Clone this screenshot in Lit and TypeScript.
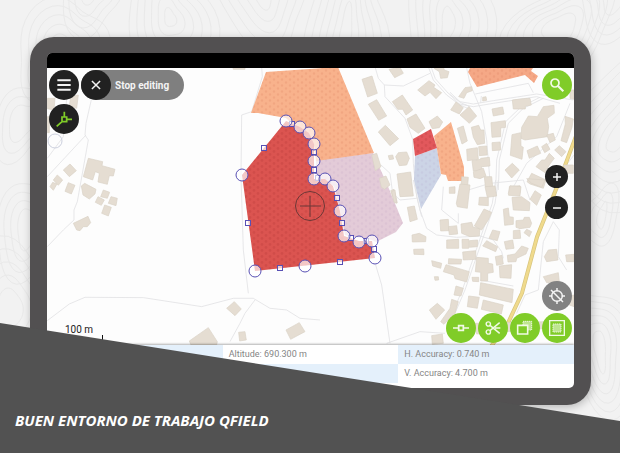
import { LitElement, html, svg, css } from "lit";
import { customElement } from "lit/decorators.js";

/* Map sheets: each holds outlines in thirds of a map unit from its own origin. */
interface Sheet {
  x: number;
  y: number;
  roads: string[];
  buildings: string[];
}

const SHEETS: Sheet[] = [
  {
    x: 0, y: 20,
    roads: [
      "275,150 275,235 258,310 255,345 265,360 232,545 222,570 222,600 190,630 142,680",
      "142,470 258,345",
      "142,415 190,350 200,235",
      "142,902 208,852 255,832 430,833 605,860 700,835 760,835 810,865 860,870 900,895 960,900",
      "765,840 735,880 720,910 690,965",
    ],
    buildings: [
      "265,415 308,425 306,437 345,448 340,468 328,467 322,493 294,486 298,460 286,455 278,480 250,470",
      "190,450 210,432 229,452 208,470",
      "160,480 172,465 188,480 175,496",
      "150,500 158,487 171,492 160,511",
      "195,514 205,488 225,496 214,522",
      "244,498 254,490 288,508 285,522 268,537 249,525",
      "302,530 310,510 329,517 322,535",
      "286,547 294,530 313,540 304,556",
      "325,550 333,530 352,535 348,557",
      "305,580 314,555 334,562 325,588",
      "142,235 165,235 162,270 142,266",
      "212,230 235,225 230,265 208,258",
      "142,290 148,290 148,338 142,338",
      "220,610 264,589 272,608 262,620 250,620 240,632 230,630",
      "568,963 625,923 652,965 650,975 573,975",
      "680,865 703,845 724,867 705,887",
      "716,937 735,935 739,960 719,963",
      "858,930 898,908 915,935 872,958",
    ],
  },
  {
    x: 230, y: 50,
    roads: [
      "95,50 97,80 65,185 35,195 33,380 40,600 55,730",
      "437,645 455,705 480,880",
    ],
    buildings: ["8,50 45,50 45,58 10,58"],
  },
  {
    x: 350, y: 50,
    roads: [
      "75,50 85,85 103,105 160,108 240,70",
      "103,105 105,140 165,205 188,268 190,340 200,440 215,500",
      "235,50 250,90 290,135 330,165 360,178",
      "243,50 256,86 294,129 332,158 360,170",
      "93,345 120,370 128,430 150,450 200,445",
    ],
    buildings: [
      "36,88 66,78 82,130 53,141",
      "55,163 80,149 110,198 86,211",
      "85,246 106,226 146,266 120,287",
      "117,58 150,52 160,70 134,83",
      "127,155 157,135 188,180 168,195 158,178 143,178",
      "171,207 198,192 225,235 205,250 180,232",
      "203,120 237,92 255,105 251,112 275,128 258,146 240,127 225,138",
      "237,215 262,198 278,216 268,233 247,236",
      "252,55 280,50 283,60 297,65 292,83 272,85 268,65",
      "115,317 128,315 131,327 118,329",
      "137,320 145,308 170,306 178,325 170,345 148,347",
      "65,315 80,310 93,350 76,362",
      "88,385 108,378 120,405 104,418 94,412",
      "141,372 182,366 190,438 150,440",
      "298,412 315,410 315,430 298,430",
      "122,422 132,418 142,458 134,458",
    ],
  },
  {
    x: 450, y: 40,
    roads: [
      "0,157 30,185 70,192 130,182 260,162 370,180",
      "0,164 28,192 70,200 130,190 260,170 330,190",
      "145,450 148,360 175,250 220,205 280,175",
      "137,450 140,360 167,245 214,200 270,172",
      "122,450 110,300 95,215 60,130 50,84",
      "76,162 235,130 250,158",
      "92,188 94,168",
      "360,190 320,290 230,370 185,450",
      "300,480 330,400 372,345",
    ],
    buildings: [
      "26,170 45,143 65,140 67,152 50,158 42,175",
      "2,210 18,186 40,203 28,222",
      "30,225 57,200 80,228 58,250",
      "98,172 108,170 110,181 98,183",
      "126,207 158,201 162,222 130,228",
      "187,180 220,176 240,175 244,195 226,199 226,207 190,207",
      "123,248 166,242 167,262 152,264 152,290 126,292",
      "126,308 150,306 152,330 127,332",
      "215,262 228,240 235,228 262,230 280,200 312,196 313,220 292,235 296,260 292,290 225,300 213,295",
      "186,284 212,278 213,318 220,322 216,358 181,346",
      "290,285 310,280 316,300 300,308",
      "231,332 262,318 272,340 238,355",
      "275,320 290,310 300,328 284,338",
      "314,330 328,317 348,335 335,350",
      "165,390 187,370 208,390 185,414",
      "345,229 370,237 366,262 350,308 333,302 346,252",
      "258,380 275,360 285,360 298,340 313,355 300,372 285,398",
      "231,425 245,400 288,420 280,445 240,432",
      "178,440 210,437 210,458 178,458",
      "64,262 86,256 92,270 102,270 104,310 82,314 70,292",
      "50,328 82,323 85,358 52,362",
      "86,320 110,318 112,345 88,347",
      "66,362 92,358 92,355 118,352 120,378 95,380 95,390 70,393",
      "70,395 100,385 108,408 90,416 72,412",
      "103,410 125,410 128,440 106,440",
      "340,375 370,375 370,400 350,400",
      "360,150 372,150 372,178 360,175",
      "22,265 40,258 52,303 36,312",
      "35,410 55,412 52,450 33,448",
    ],
  },
  {
    x: 380, y: 180,
    roads: [
      "100,0 120,90 140,145 170,165 230,172 300,168 340,180 365,215 370,235",
      "355,0 345,70 300,200 255,330 225,400 212,440",
      "347,0 337,70 292,200 247,330 217,400 204,440",
      "190,20 185,90 235,130 235,100",
      "520,125 538,150 535,230 560,270",
      "520,125 490,185 475,330 435,345 410,400",
      "20,490 120,455 195,460",
      "300,300 400,318",
      "265,30 330,10 430,0 450,60",
    ],
    buildings: [
      "35,35 45,30 50,70 42,66",
      "82,82 103,78 112,118 90,125",
      "96,165 118,160 138,170 137,185 97,186",
      "101,208 131,207 132,224 102,223",
      "229,70 240,12 270,15 262,85 232,80",
      "298,52 325,52 325,77 296,75",
      "315,20 345,18 350,48 322,52",
      "385,40 390,17 423,20 420,48 386,46",
      "396,52 425,50 450,68 448,92 400,90",
      "450,58 465,32 484,45 470,76",
      "440,-4 495,0 485,22 455,10",
      "370,88 385,84 388,110 400,112 400,133 374,136",
      "180,120 205,118 207,152 182,153",
      "205,140 230,137 233,162 208,164",
      "243,132 275,127 280,142 300,145 298,168 270,170 245,160",
      "283,138 312,87 335,97 325,120 305,150",
      "327,175 338,150 360,155 352,182",
      "200,180 236,178 236,205 200,205",
      "246,178 266,178 266,205 247,205",
      "268,182 293,180 292,200 268,202",
      "308,198 320,182 353,200 347,215",
      "373,185 398,180 402,205 378,208",
      "400,152 420,150 422,175 400,176",
      "408,122 430,120 433,112 448,112 455,130 450,142 420,146 408,142",
      "432,158 440,148 455,155 448,170",
      "248,216 287,212 288,238 250,240",
      "382,226 405,222 425,198 445,205 438,222 410,235 408,245 384,246",
      "346,230 366,226 370,252 350,256",
      "358,258 395,254 393,295 360,293",
      "290,232 325,235 325,250 338,252 340,277 323,280 323,303 302,303 302,277 286,275",
      "206,236 245,238 243,252 205,252",
      "190,275 198,254 268,275 260,306 225,296 222,285",
      "155,242 185,250 182,265 158,258",
      "163,290 175,290 176,300 165,301",
      "276,292 296,292 296,305 278,304",
      "302,308 400,328 396,368 298,345",
      "310,360 370,375 364,402 304,388",
      "266,348 298,352 292,385 262,380",
      "228,318 250,325 243,348 222,345",
      "148,390 172,370 194,390 168,418",
      "182,425 210,385 215,358 235,365 225,400 192,433",
      "155,467 187,462 190,490 157,493",
      "493,230 505,210 530,208 534,240 500,245",
      "557,225 582,223 582,245 560,245",
      "490,290 535,278 538,305 500,308",
      "568,348 582,345 582,380 568,375",
      "285,430 500,425 500,445 290,462",
    ],
  },
];

const VERTICES: [number, number][] = [
  [286, 121], [300, 127], [309, 133], [314, 144], [314, 161], [314, 179], [325, 179], [333, 186],
  [340, 211], [344, 236], [359, 242], [372, 241], [375, 258], [305, 266], [255, 271], [242, 175],
];
const MIDPOINTS: [number, number][] = [
  [264, 148], [248, 223], [280, 268], [340, 262], [337, 198], [342, 223], [314, 170],
  [292, 124], [351, 238], [366, 241], [374, 249], [318, 178], [314, 152],
];

/* Contour hills: centre, radii, tilt in degrees, number of rings and the gap between them. */
type Hill = [number, number, number, number, number, number, number];
const HILLS: Hill[] = [
  [8, 312, 14, 22, 10, 5, 8],
  [28, 228, 10, 22, 8, 4, 7],
  [60, 50, 12, 16, 35, 5, 7],
  [22, 122, 12, 20, 20, 3, 7],
  [170, 18, 6, 9, -10, 6, 7],
  [346, 30, 6, 24, 8, 6, 7],
  [448, 24, 7, 16, 5, 6, 7],
  [260, -12, 10, 22, -20, 5, 8],
  [560, 28, 12, 18, 50, 6, 6],
  [612, 0, 10, 14, 10, 4, 7],
  [622, 130, 8, 26, 30, 7, 7],
  [602, 216, 4, 14, 10, 3, 6],
  [600, 350, 6, 20, -8, 6, 6],
  [90, -10, 10, 14, 0, 4, 7],
];

/* One closed contour; the wobble gives each hill its own uneven outline. */
function contour([cx, cy, rx, ry, tilt, , gap]: Hill, ring: number): string {
  const turn = (tilt * Math.PI) / 180;
  const points: string[] = [];
  for (let a = 0; a < 360; a += 8) {
    const t = (a * Math.PI) / 180;
    const k = 1 + 0.13 * Math.sin(3 * t + cx) + 0.08 * Math.sin(2 * t + cy + ring / 3);
    const x = Math.cos(t) * (rx + ring * gap) * k;
    const y = Math.sin(t) * (ry + ring * gap * 1.4) * k;
    points.push(
      `${(cx + x * Math.cos(turn) - y * Math.sin(turn)).toFixed(1)},${(cy + x * Math.sin(turn) + y * Math.cos(turn)).toFixed(1)}`,
    );
  }
  return points.join(" ");
}

const icon = (body: unknown) =>
  html`<svg class="icon" viewBox="0 0 24 24" aria-hidden="true">${body}</svg>`;

const ICONS = {
  menu: icon(svg`<path d="M2 5h20M2 12h20M2 19h20" stroke-width="3"/>`),
  close: icon(svg`<path d="M5 5l14 14M19 5L5 19" stroke-width="2.600"/>`),
  snap: icon(svg`<path d="M9 9h7v7H9zM12.500 9V1M16 12.500h8M9 16l-8 7" stroke-width="2.600"/>`),
  search: icon(svg`<circle cx="9" cy="9" r="6" stroke-width="2.600"/><path d="M13.500 13.500l8 8" stroke-width="3.200"/>`),
  plus: icon(svg`<path d="M12 4v16M4 12h16" stroke-width="3"/>`),
  minus: icon(svg`<path d="M4 12h16" stroke-width="3"/>`),
  gps: icon(svg`<circle cx="12" cy="12" r="8" stroke-width="2.200"/><path d="M12 0v5M12 19v5M0 12h5M19 12h5M3 3l18 18" stroke-width="2.200"/>`),
  vertex: icon(svg`<path d="M8.500 8.500h7v7h-7zM0 12h8M16 12h8" stroke-width="2.600"/>`),
  cut: icon(svg`<circle cx="5" cy="6" r="3.200" stroke-width="2.200"/><circle cx="5" cy="18" r="3.200" stroke-width="2.200"/><path d="M7.500 8L22 20M7.500 16L22 4M15 12h8" stroke-width="2.200"/>`),
  copy: icon(svg`<path d="M9 2h13v13H9z" class="hatch"/><path d="M9 8V2h13v13h-5" stroke-width="1.400" stroke-dasharray="2 1"/><path d="M1 8h15v13H1z" class="solid" stroke-width="2.400"/>`),
  select: icon(svg`<path d="M6 6h12v12H6z" class="hatch"/><path d="M6 6h12v12H6z" stroke-width="1.400" stroke-dasharray="2 1"/><path d="M1 1h22v22H1z" stroke-width="2"/>`),
};

@customElement("field-map")
export class FieldMap extends LitElement {
  static styles = css`
    :host { display: block; position: absolute; inset: 0; }
    svg { display: block; width: 100%; height: 100%; background: #fdfdfd; }
    .road { fill: none; stroke: #e2e2e4; stroke-width: 2.5; stroke-linejoin: round; }
    .building { fill: #e5ddd2; stroke: #dad1c5; stroke-width: 2; }
    .casing { fill: none; stroke: #d6c47e; stroke-width: 4; }
    .highway { fill: none; stroke: #f0da8c; stroke-width: 2.6; }
    .node { fill: #fff; fill-opacity: 0.68; stroke: #5850b4; stroke-width: 1; }
    .target { fill: none; stroke: #6b3736; stroke-width: 1; }
    .scale { font: 10px Roboto, sans-serif; fill: #222; }
    .bar { stroke: #111; stroke-width: 1; }
    .ring { fill: none; stroke: #ccd0de; stroke-width: 1; }
  `;

  render() {
    const parcel = (points: string, fill: string, dots: string) => svg`
      <polygon points=${points} fill=${fill}></polygon>
      <polygon points=${points} fill=${`url(#${dots})`}></polygon>`;
    return html`
      <svg viewBox="47 68 527 277" preserveAspectRatio="xMidYMid slice" role="img" aria-label="Parcel map">
        <defs>
          <pattern id="warm" width="8" height="6" patternUnits="userSpaceOnUse">
            <circle cx="2" cy="1.500" r="1.200" fill="#c05030" fill-opacity=".12"></circle>
            <circle cx="6" cy="4.500" r="1.200" fill="#c05030" fill-opacity=".12"></circle>
          </pattern>
          <pattern id="deep" width="8" height="6" patternUnits="userSpaceOnUse">
            <circle cx="2" cy="1.500" r="1.400" fill="#8c2020" fill-opacity=".14"></circle>
            <circle cx="6" cy="4.500" r="1.400" fill="#8c2020" fill-opacity=".14"></circle>
          </pattern>
          <pattern id="cool" width="8" height="6" patternUnits="userSpaceOnUse">
            <circle cx="2" cy="1.500" r="1.200" fill="#a080b0" fill-opacity=".1"></circle>
            <circle cx="6" cy="4.500" r="1.200" fill="#a080b0" fill-opacity=".1"></circle>
          </pattern>
        </defs>
        ${SHEETS.map((s) => svg`
          <g transform=${`translate(${s.x} ${s.y}) scale(0.3333)`}>
            ${s.roads.map((p) => svg`<polyline class="road" points=${p}></polyline>`)}
          </g>`)}
        <polyline class="casing" points="576,136 557,187 537,237 522,293 508,323 490,348"></polyline>
        <polyline class="highway" points="576,136 557,187 537,237 522,293 508,323 490,348"></polyline>
        ${parcel("316,160 373,153 387,184 403,223 396,232 376,242 372,240 345,235 340,210 334,186 316,178", "#e3cbd8", "cool")}
        ${parcel("266,72 338,67 374,153 316,161 314,145 286,118 258,113 251,113", "#f8b28c", "warm")}
        ${parcel("415,156 437,148 441,175 438,180 421,209 414,180", "#ccd4e6", "cool")}
        ${parcel("434,136 451,122 464,167 464,181 448,181 446,175 441,174 437,149", "#f8b28c", "warm")}
        ${parcel("470,68 533,68 531,71 538,76 534,83 525,75 477,87 468,72", "#f5a886", "warm")}
        ${parcel("413,139 431,129 437,148 415,156", "#e2585c", "deep")}
        ${parcel("286,121 300,127 309,133 314,144 314,179 325,179 333,186 340,211 344,236 359,241 372,241 375,258 255,271 242,175", "#db5450", "deep")}
        ${SHEETS.map((s) => svg`
          <g transform=${`translate(${s.x} ${s.y}) scale(0.3333)`}>
            ${s.buildings.map((p) => svg`<polygon class="building" points=${p}></polygon>`)}
          </g>`)}
        <circle class="ring" cx="55" cy="141" r="7"></circle>
        ${MIDPOINTS.map(([x, y]) => svg`<rect class="node" x=${x - 2.5} y=${y - 2.5} width="5" height="5"></rect>`)}
        ${VERTICES.map(([x, y]) => svg`<circle class="node" cx=${x} cy=${y} r="6"></circle>`)}
        <circle class="target" cx="310" cy="206" r="14.500"></circle>
        <path class="target" d="M300 206h21M310 196v21"></path>
        <text class="scale" x="65" y="333">100 m</text>
        <path class="bar" d="M102.500 335v8"></path>
      </svg>`;
  }
}

@customElement("app-root")
export class AppRoot extends LitElement {
  static styles = css`
    :host { display: block; }
    .page {
      position: relative;
      display: flex;
      flex-direction: column;
      min-height: 100vh;
      background: #f2f2f2;
      font-family: Roboto, "Liberation Sans", sans-serif;
      overflow: hidden;
    }
    .contours { position: absolute; inset: 0; width: 100%; height: 100%; fill: none; stroke: #e9e9e9; stroke-width: 1; }
    .stage { position: relative; padding: 37px 29px 0 30px; }
    .tablet {
      background: #525051;
      border-radius: 24px;
      padding: 16px 17px 17px;
      box-shadow: 1px 2px 8px rgb(0 0 0 / 0.25);
    }
    .screen { border-radius: 5px; overflow: hidden; background: #fff; }
    .status { height: 15px; background: #000; }
    .map { position: relative; aspect-ratio: 527 / 277; }
    .left { position: absolute; top: 2px; left: 2px; display: grid; gap: 4px; }
    .row { display: flex; gap: 2px; }
    .right {
      position: absolute;
      top: 2px; right: 2px; bottom: 2px;
      display: flex;
      flex-direction: column;
      align-items: flex-end;
    }
    .zoom { display: grid; gap: 8px; margin: 65px 4px auto 0; }
    .tools { display: flex; gap: 2px; margin-top: 2px; }
    button {
      display: flex;
      align-items: center;
      justify-content: center;
      box-sizing: border-box;
      width: 30px;
      height: 30px;
      padding: 0;
      border: 0;
      border-radius: 50%;
      background: #212121;
      color: #f4f4f4;
      font: 700 10px Roboto, sans-serif;
    }
    .green { background: #80cc28; color: #f1fae5; }
    .grey { background: #828282; }
    .snap { color: #80cc28; }
    .small { width: 23px; height: 23px; }
    .small .icon { width: 12px; height: 12px; }
    .stop { width: 103px; justify-content: flex-start; border-radius: 15px; background: #7f7f7f; gap: 4px; }
    .knob { display: flex; align-items: center; justify-content: center; width: 30px; height: 30px; border-radius: 50%; background: #212121; }
    .knob .icon { width: 14px; height: 14px; }
    .icon { width: 16px; height: 16px; fill: none; stroke: currentColor; overflow: visible; }
    .hatch { fill: currentColor; fill-opacity: 0.55; stroke: none; }
    .solid { fill: #80cc28; }
    .readings {
      display: grid;
      grid-template-columns: repeat(3, 1fr);
      grid-auto-rows: 19px;
      margin: 0;
      padding: 0 0 5px;
      list-style: none;
      position: relative;
      box-shadow: 0 -1px 2px rgb(0 0 0 / 0.3);
      font-size: 9px;
      line-height: 19px;
      color: #858585;
    }
    .readings li { padding-left: 6px; background: #fff; }
    .readings li:nth-child(odd) { background: #e4f0fb; }
    .caption {
      position: relative;
      flex: 1;
      box-sizing: border-box;
      margin: -82px 0 0;
      padding: 87px 15px 23px;
      background: #525252;
      clip-path: polygon(0 0, 100% 98px, 100% 100%, 0 100%);
      color: #fff;
      font: italic 700 15px/20px "Open Sans", "Noto Sans", sans-serif;
    }
  `;

  render() {
    return html`
      <main class="page">
        <svg class="contours" viewBox="0 0 620 453" preserveAspectRatio="xMidYMid slice" aria-hidden="true">
          ${HILLS.map((hill) =>
            Array.from({ length: hill[5] }, (_, i) => svg`<polygon points=${contour(hill, i)}></polygon>`))}
        </svg>
        <div class="stage">
          <div class="tablet">
            <div class="screen">
              <div class="status"></div>
              <div class="map">
                <field-map></field-map>
                <div class="left">
                  <div class="row">
                    <button aria-label="Menu">${ICONS.menu}</button>
                    <button class="stop"><span class="knob">${ICONS.close}</span>Stop editing</button>
                  </div>
                  <button class="snap" aria-label="Snapping">${ICONS.snap}</button>
                </div>
                <div class="right">
                  <button class="green" aria-label="Search">${ICONS.search}</button>
                  <div class="zoom">
                    <button class="small" aria-label="Zoom in">${ICONS.plus}</button>
                    <button class="small" aria-label="Zoom out">${ICONS.minus}</button>
                  </div>
                  <button class="grey" aria-label="Positioning">${ICONS.gps}</button>
                  <div class="tools">
                    <button class="green" aria-label="Edit vertices">${ICONS.vertex}</button>
                    <button class="green" aria-label="Split">${ICONS.cut}</button>
                    <button class="green" aria-label="Reshape">${ICONS.copy}</button>
                    <button class="green" aria-label="Fill ring">${ICONS.select}</button>
                  </div>
                </div>
              </div>
              <ul class="readings">
                <li></li>
                <li>Altitude: 690.300 m</li>
                <li>H. Accuracy: 0.740 m</li>
                <li></li>
                <li></li>
                <li>V. Accuracy: 4.700 m</li>
              </ul>
            </div>
          </div>
        </div>
        <h1 class="caption">BUEN ENTORNO DE TRABAJO QFIELD</h1>
      </main>`;
  }
}
